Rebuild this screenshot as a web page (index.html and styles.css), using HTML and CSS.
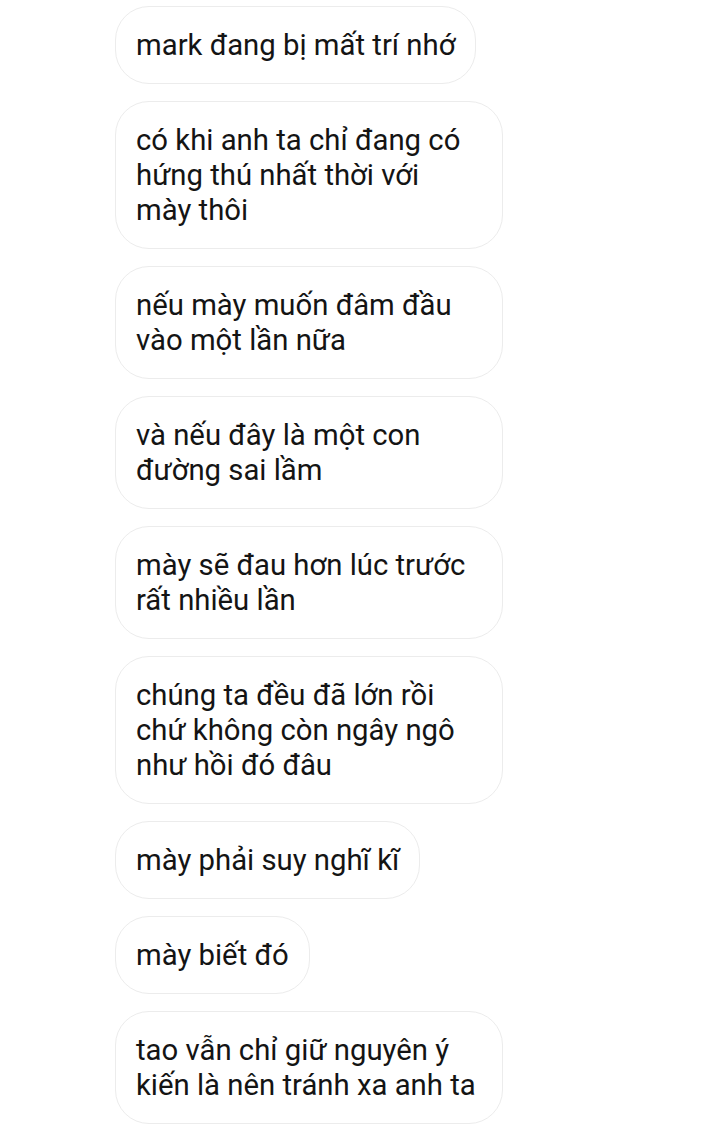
FILE: index.html
```html
<!DOCTYPE html>
<html lang="vi">
<head>
<meta charset="utf-8">
<link rel="stylesheet" href="styles.css">
</head>
<body>
<div class="thread">
  <div class="bubble">mark đang bị mất trí nhớ</div>
  <div class="bubble">có khi anh ta chỉ đang có hứng thú nhất thời với <span class="keep">mày thôi</span></div>
  <div class="bubble">nếu mày muốn đâm đầu vào một lần nữa</div>
  <div class="bubble">và nếu đây là một con đường sai lầm</div>
  <div class="bubble">mày sẽ đau hơn lúc trước rất nhiều lần</div>
  <div class="bubble">chúng ta đều đã lớn rồi chứ không còn ngây ngô như hồi đó đâu</div>
  <div class="bubble">mày phải suy nghĩ kĩ</div>
  <div class="bubble">mày biết đó</div>
  <div class="bubble">tao vẫn chỉ giữ nguyên ý kiến là nên tránh xa anh ta</div>
</div>
</body>
</html>
```
FILE: styles.css
```css
html, body {
  margin: 0;
  padding: 0;
  background: #ffffff;
}
body {
  width: 719px;
  height: 1127px;
  overflow: hidden;
  font-family: Roboto, "Noto Sans", sans-serif;
  color: #141414;
}
.thread {
  display: flex;
  flex-direction: column;
  align-items: flex-start;
  gap: 17px;
  padding: 6px 0 0 115px;
}
.bubble {
  box-sizing: border-box;
  max-width: 388px;
  padding: 20.5px 20px 20.5px 20px;
  border: 1.5px solid #ececec;
  border-radius: 34px;
  font-size: 29.3px;
  line-height: 35px;
  background: #ffffff;
}
.keep {
  white-space: nowrap;
}
```
